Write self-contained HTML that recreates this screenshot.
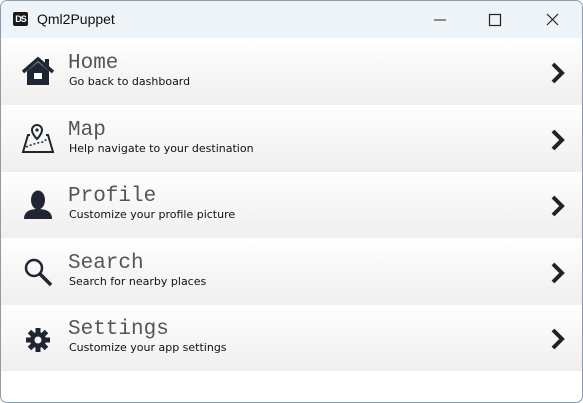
<!DOCTYPE html>
<html><head><style>
*{margin:0;padding:0;box-sizing:border-box}
html,body{width:583px;height:403px;overflow:hidden;background:#fff}
.win{position:absolute;left:0;top:0;width:583px;height:403px;border:1px solid #8d9aab;border-radius:7px;overflow:hidden;background:#fff}
.tb{position:absolute;left:0;top:0;width:583px;height:37px;background:#eff4f9}
.tb .t{position:absolute;left:36px;top:10px;font:14px "Liberation Sans",sans-serif;color:#111}
.logo{position:absolute;left:12px;top:11px;width:15px;height:14px;background:#1a1a1a;border-radius:2px;color:#fff;font:bold 9px "Liberation Sans",sans-serif;line-height:14px;text-align:center;letter-spacing:-1px}
.row{position:absolute;left:0;width:583px;height:66px;background:linear-gradient(#fefefe,#f0efee)}
.row .h{position:absolute;left:67px;top:13px;font:21px "Liberation Mono",monospace;color:#555}
.row .s{position:absolute;left:68px;top:36px;font:11px "DejaVu Sans","Liberation Sans",sans-serif;color:#111}
.row svg.i{position:absolute;left:20px;top:17px}
.row svg.c{position:absolute;left:548px;top:22px}
</style></head><body>
<div class="win">
<div class="tb"><div class="logo">DS</div><div class="t">Qml2Puppet</div>
<svg style="position:absolute;left:430px;top:12px" width="140" height="14"><line x1="3" y1="7" x2="15" y2="7" stroke="#222" stroke-width="1"/><rect x="58.5" y="1.5" width="11" height="11" fill="none" stroke="#222" stroke-width="1.2"/><path d="M116 1L127 12M127 1L116 12" stroke="#222" stroke-width="1.2"/></svg>
</div>

<div class="row" style="top:38px"><svg class="i" width="34" height="32" viewBox="0 0 34 32"><path d="M2 16L17 3L32 16" fill="none" stroke="#1f2533" stroke-width="3.5"/><rect x="24" y="3" width="4" height="8" fill="#1f2533"/><path d="M6 15L17 6L28 15V29H6Z" fill="#1f2533"/><rect x="13" y="17" width="8" height="6" fill="#fff"/></svg><div class="h">Home</div><div class="s">Go back to dashboard</div>
<svg class="c" width="18" height="24"><path d="M4 3L13 12L4 21" fill="none" stroke="#222" stroke-width="4"/></svg></div>

<div class="row" style="top:105px"><svg class="i" width="34" height="32" viewBox="0 0 34 32"><path d="M16 2a5 5 0 0 1 5 5c0 4-5 9-5 9s-5-5-5-9a5 5 0 0 1 5-5z" fill="none" stroke="#1f2533" stroke-width="2"/><circle cx="16" cy="7" r="1.6" fill="#1f2533"/><path d="M9 12H7L2 29H32L27 12H25" fill="none" stroke="#1f2533" stroke-width="2"/><path d="M5 24L10 22L16 20L22 19L26 16" fill="none" stroke="#1f2533" stroke-width="1.5" stroke-dasharray="2 2"/></svg><div class="h">Map</div><div class="s">Help navigate to your destination</div>
<svg class="c" width="18" height="24"><path d="M4 3L13 12L4 21" fill="none" stroke="#222" stroke-width="4"/></svg></div>

<div class="row" style="top:171px"><svg class="i" width="34" height="32" viewBox="0 0 34 32"><ellipse cx="17" cy="11" rx="7" ry="9.5" fill="#1f2533"/><path d="M3 30C3 23 8 20 17 20C26 20 31 23 31 30Z" fill="#1f2533"/></svg><div class="h">Profile</div><div class="s">Customize your profile picture</div>
<svg class="c" width="18" height="24"><path d="M4 3L13 12L4 21" fill="none" stroke="#222" stroke-width="4"/></svg></div>

<div class="row" style="top:238px"><svg class="i" width="34" height="32" viewBox="0 0 34 32"><circle cx="13" cy="12" r="8" fill="none" stroke="#1f2533" stroke-width="2.5"/><path d="M19 18L30 29" stroke="#1f2533" stroke-width="3.5"/></svg><div class="h">Search</div><div class="s">Search for nearby places</div>
<svg class="c" width="18" height="24"><path d="M4 3L13 12L4 21" fill="none" stroke="#222" stroke-width="4"/></svg></div>

<div class="row" style="top:304px"><svg class="i" width="34" height="32" viewBox="0 0 34 32"><g transform="translate(17,18)" fill="#1f2533"><circle r="8"/><rect x="-2.5" y="-12" width="5" height="24"/><rect x="-2.5" y="-12" width="5" height="24" transform="rotate(45)"/><rect x="-2.5" y="-12" width="5" height="24" transform="rotate(90)"/><rect x="-2.5" y="-12" width="5" height="24" transform="rotate(135)"/><circle r="3.5" fill="#f6f6f5"/></g></svg><div class="h">Settings</div><div class="s">Customize your app settings</div>
<svg class="c" width="18" height="24"><path d="M4 3L13 12L4 21" fill="none" stroke="#222" stroke-width="4"/></svg></div>
</div>
</body></html>
